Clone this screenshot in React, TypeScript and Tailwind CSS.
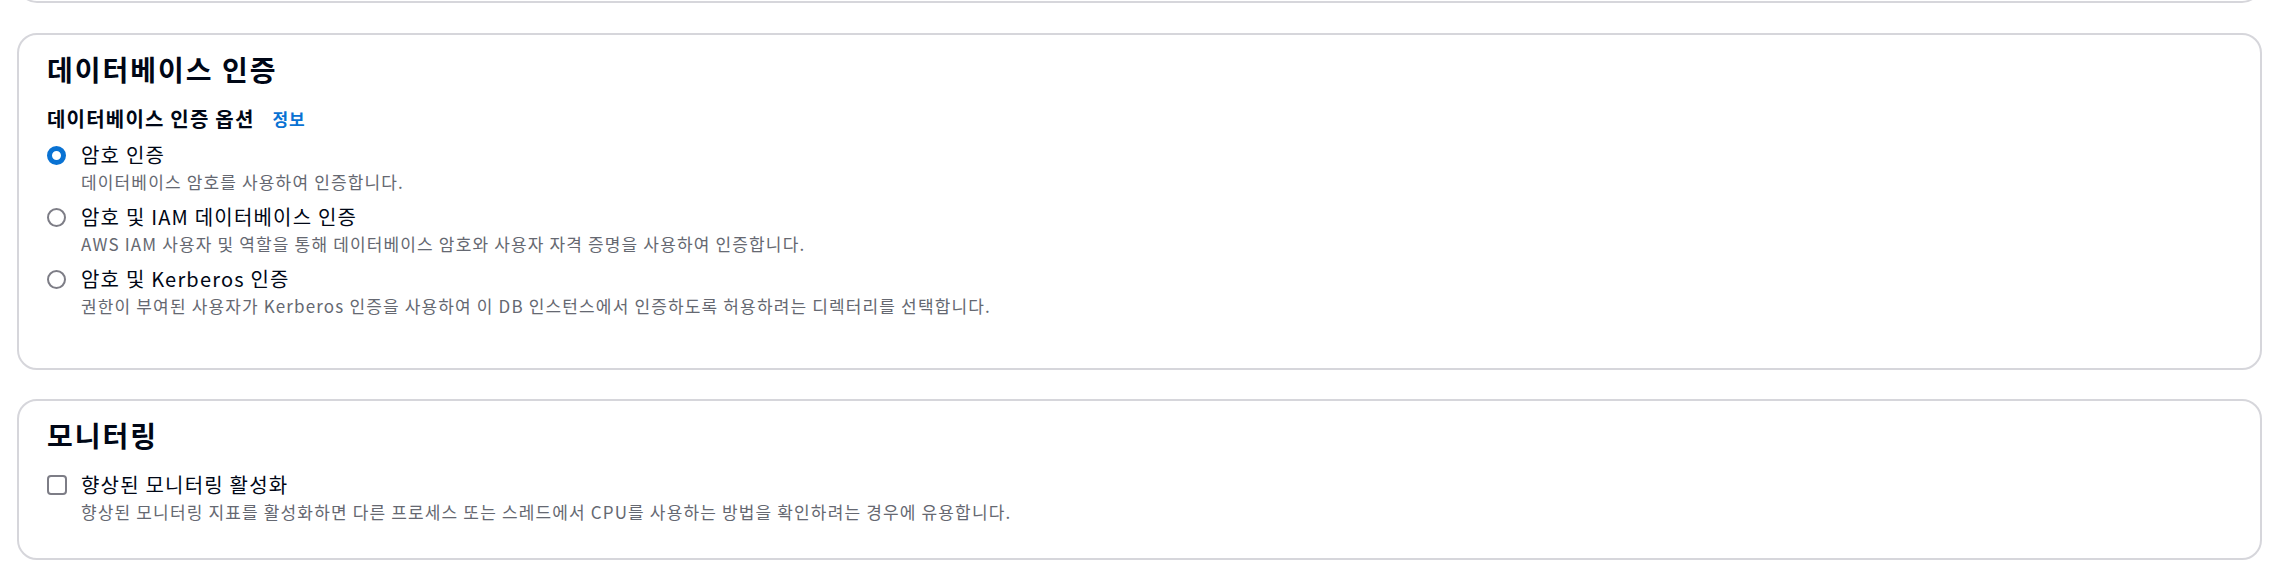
import React from "react";

const font = "font-['Noto_Sans_CJK_KR',_'Noto_Sans',sans-serif]";

function Radio({ checked }: { checked?: boolean }) {
  return (
    <div className="w-[19px] h-[28px] flex items-center shrink-0">
      {checked ? (
        <div className="w-[19px] h-[19px] rounded-full border-[5.5px] border-[#0972d3] bg-white" />
      ) : (
        <div className="w-[19px] h-[19px] rounded-full border-2 border-[#7d7d86] bg-white" />
      )}
    </div>
  );
}

function Option({ label, desc, checked }: { label: string; desc: string; checked?: boolean }) {
  return (
    <div className="flex gap-[15px]">
      <Radio checked={checked} />
      <div className="flex flex-col">
        <div className="text-[20px] leading-[28px] tracking-[1.2px] text-[#000716]">{label}</div>
        <div className="mt-[1px] text-[17px] leading-[24px] tracking-[1.15px] text-[#656871]">{desc}</div>
      </div>
    </div>
  );
}

export default function App() {
  return (
    <div className={`w-full h-[573px] overflow-hidden bg-white ${font}`}>
      <div className="pl-[17px] pr-[26px] flex flex-col">
        {/* tail of the previous container */}
        <div className="h-[40px] -mt-[37px] rounded-[20px] border-2 border-[#d6d6db] bg-white" />

        <section className="mt-[30px] rounded-[20px] border-2 border-[#d6d6db] bg-white pl-[28px] pr-[28px] pt-[16px] pb-[50px]">
          <h2 className="text-[28px] leading-[36px] tracking-[2px] font-bold text-[#000716]">데이터베이스 인증</h2>
          <div className="mt-[18px] flex items-center h-[28px]">
            <span className="text-[20px] leading-[28px] tracking-[1.2px] font-bold text-[#000716]">데이터베이스 인증 옵션</span>
            <a className="ml-[18px] text-[17px] leading-[28px] tracking-[1px] font-bold text-[#0972d3]">정보</a>
          </div>
          <div className="mt-[8px] flex flex-col gap-[9px]">
            <Option checked label="암호 인증" desc="데이터베이스 암호를 사용하여 인증합니다." />
            <Option
              label="암호 및 IAM 데이터베이스 인증"
              desc="AWS IAM 사용자 및 역할을 통해 데이터베이스 암호와 사용자 자격 증명을 사용하여 인증합니다."
            />
            <Option
              label="암호 및 Kerberos 인증"
              desc="권한이 부여된 사용자가 Kerberos 인증을 사용하여 이 DB 인스턴스에서 인증하도록 허용하려는 디렉터리를 선택합니다."
            />
          </div>
        </section>

        <section className="mt-[29px] rounded-[20px] border-2 border-[#d6d6db] bg-white pl-[28px] pr-[28px] pt-[16px] pb-[34px]">
          <h2 className="text-[28px] leading-[36px] tracking-[2px] font-bold text-[#000716]">모니터링</h2>
          <div className="mt-[18px] flex gap-[14px]">
            <div className="h-[28px] flex items-center shrink-0">
              <div className="w-[20px] h-[20px] rounded-[4px] border-2 border-[#7d7d86] bg-white" />
            </div>
            <div className="flex flex-col">
              <div className="text-[20px] leading-[28px] tracking-[1.2px] text-[#000716]">향상된 모니터링 활성화</div>
              <div className="mt-[1px] text-[17px] leading-[24px] tracking-[1.15px] text-[#656871]">
                향상된 모니터링 지표를 활성화하면 다른 프로세스 또는 스레드에서 CPU를 사용하는 방법을 확인하려는 경우에 유용합니다.
              </div>
            </div>
          </div>
        </section>
      </div>
    </div>
  );
}
